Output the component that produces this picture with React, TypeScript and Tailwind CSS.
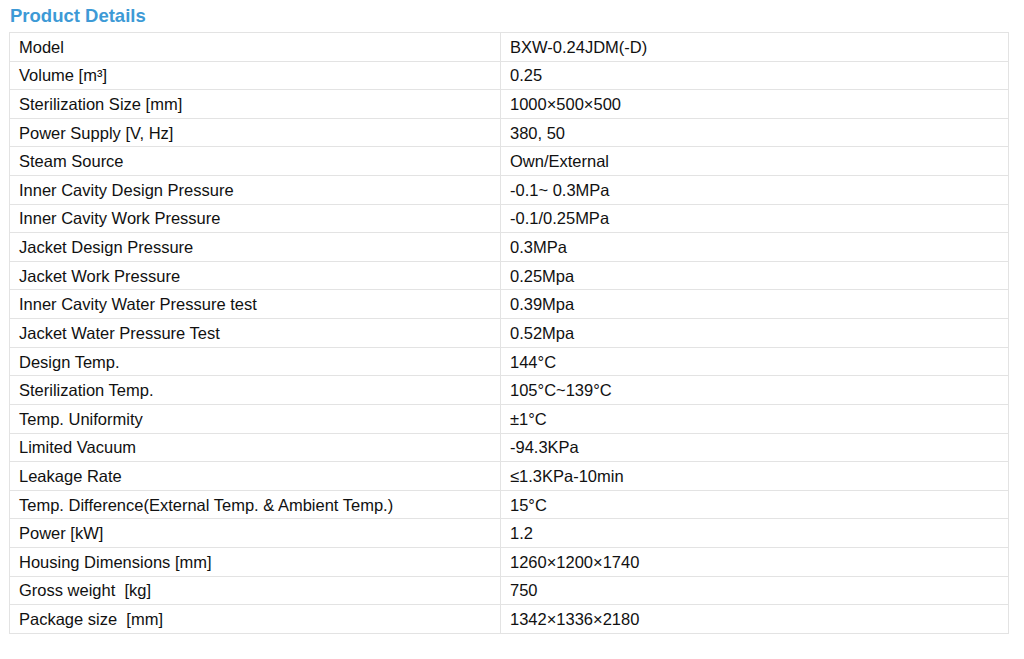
import React from "react";

const rows: [string, string][] = [
  ["Model", "BXW-0.24JDM(-D)"],
  ["Volume [m³]", "0.25"],
  ["Sterilization Size [mm]", "1000×500×500"],
  ["Power Supply [V, Hz]", "380, 50"],
  ["Steam Source", "Own/External"],
  ["Inner Cavity Design Pressure", "-0.1~ 0.3MPa"],
  ["Inner Cavity Work Pressure", "-0.1/0.25MPa"],
  ["Jacket Design Pressure", "0.3MPa"],
  ["Jacket Work Pressure", "0.25Mpa"],
  ["Inner Cavity Water Pressure test", "0.39Mpa"],
  ["Jacket Water Pressure Test", "0.52Mpa"],
  ["Design Temp.", "144°C"],
  ["Sterilization Temp.", "105°C~139°C"],
  ["Temp. Uniformity", "±1°C"],
  ["Limited Vacuum", "-94.3KPa"],
  ["Leakage Rate", "≤1.3KPa-10min"],
  ["Temp. Difference(External Temp. & Ambient Temp.)", "15°C"],
  ["Power [kW]", "1.2"],
  ["Housing Dimensions [mm]", "1260×1200×1740"],
  ["Gross weight  [kg]", "750"],
  ["Package size  [mm]", "1342×1336×2180"],
];

export default function App() {
  return (
    <div className="w-[1024px] h-[659px] bg-white font-['Liberation_Sans',Arial,sans-serif] text-[#111]">
      <div className="pl-[10px] pt-[5px] h-[32px]">
        <h2 className="text-[18.5px] leading-[22px] font-bold text-[#3d9ad6]">Product Details</h2>
      </div>
      <table className="ml-[9px] w-[1000px] border-collapse text-[16.5px]">
        <tbody>
          {rows.map(([k, v], i) => (
            <tr key={i} className="h-[28.62px]">
              <td className="w-[491px] border border-[#e3e3e3] pl-[9px] py-0 align-middle whitespace-pre leading-[20px]">{k}</td>
              <td className="border border-[#e3e3e3] pl-[9px] py-0 align-middle whitespace-pre leading-[20px]">{v}</td>
            </tr>
          ))}
        </tbody>
      </table>
    </div>
  );
}
